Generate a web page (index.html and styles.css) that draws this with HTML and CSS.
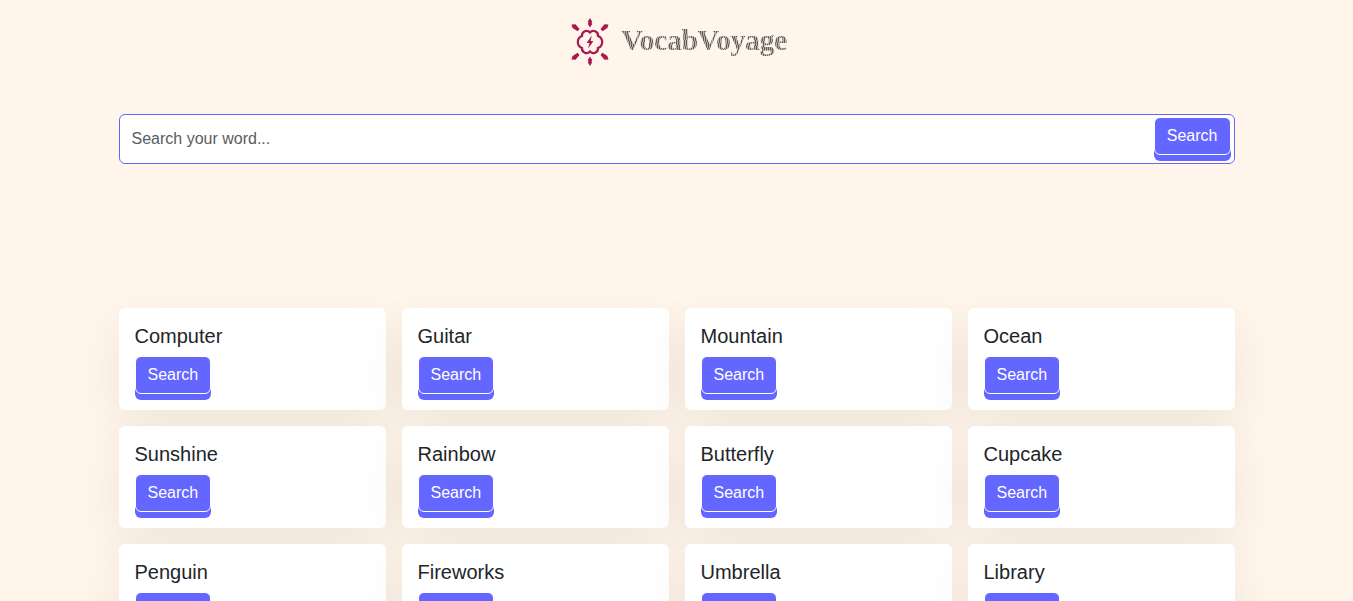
FILE: index.html
```html
<!DOCTYPE html>
<html lang="en">
  <head>
    <meta charset="utf-8" />
    <title>VocabVoyage</title>
    <meta name="viewport" content="width=device-width, initial-scale=1" />
    <link rel="stylesheet" href="styles.css">
  </head>
  <body>
    <header class="site_header">
      <a class="logo" href="#">
        <svg class="logo_icon" viewBox="0 0 40 50" width="40" height="50" aria-hidden="true">
          <g class="rays">
            <path d="M20 1 L22.4 5 L21.4 5.4 L22.2 7 L20 10.5 L17.8 7 L18.6 5 L17.6 5 Z" />
            <path d="M20 49 L17.6 45 L18.6 44.6 L17.8 43 L20 39.5 L22.2 43 L21.4 45 L22.4 45 Z" />
            <path d="M1.5 7.5 L5.5 7.2 L9.5 12 L7.6 14.2 L2.6 11 Z" />
            <path d="M38.5 7.5 L34.5 7.2 L30.5 12 L32.4 14.2 L37.4 11 Z" />
            <path d="M1.5 42.5 L5.5 42.8 L9.5 38 L7.6 35.8 L2.6 39 Z" />
            <path d="M38.5 42.5 L34.5 42.8 L30.5 38 L32.4 35.8 L37.4 39 Z" />
          </g>
          <path class="cloud" d="M20 15.5 A4.6 4.6 0 0 1 28 19 A6.4 6.4 0 0 1 28 31 A4.6 4.6 0 0 1 20 34.5 A4.6 4.6 0 0 1 12 31 A6.4 6.4 0 0 1 12 19 A4.6 4.6 0 0 1 20 15.5 Z" />
          <path class="bolt" d="M21.8 18.5 L16.6 26 L19.4 26 L18.2 31.5 L23.4 24 L20.6 24 Z" />
        </svg>
        <span class="logo_text">VocabVoyage</span>
      </a>
    </header>

    <main class="container">
      <form class="search_bar" onsubmit="return false;">
        <input class="search_input" type="text" placeholder="Search your word..." />
        <button class="search_btn">Search</button>
      </form>

      <section class="word_grid">
        <div class="word_card"><h5 class="word_title">Computer</h5><button class="search_btn">Search</button></div>
        <div class="word_card"><h5 class="word_title">Guitar</h5><button class="search_btn">Search</button></div>
        <div class="word_card"><h5 class="word_title">Mountain</h5><button class="search_btn">Search</button></div>
        <div class="word_card"><h5 class="word_title">Ocean</h5><button class="search_btn">Search</button></div>
        <div class="word_card"><h5 class="word_title">Sunshine</h5><button class="search_btn">Search</button></div>
        <div class="word_card"><h5 class="word_title">Rainbow</h5><button class="search_btn">Search</button></div>
        <div class="word_card"><h5 class="word_title">Butterfly</h5><button class="search_btn">Search</button></div>
        <div class="word_card"><h5 class="word_title">Cupcake</h5><button class="search_btn">Search</button></div>
        <div class="word_card"><h5 class="word_title">Penguin</h5><button class="search_btn">Search</button></div>
        <div class="word_card"><h5 class="word_title">Fireworks</h5><button class="search_btn">Search</button></div>
        <div class="word_card"><h5 class="word_title">Umbrella</h5><button class="search_btn">Search</button></div>
        <div class="word_card"><h5 class="word_title">Library</h5><button class="search_btn">Search</button></div>
      </section>
    </main>
  </body>
</html>
```
FILE: styles.css
```css
* {
  box-sizing: border-box;
}
body {
  margin: 0;
  background: #fff5eb;
  color: #212529;
  font-family: "Liberation Sans", Arial, sans-serif;
  font-size: 16px;
  line-height: 1.5;
}
.site_header {
  display: flex;
  justify-content: center;
  height: 114px;
  padding-top: 17px;
}
.logo {
  display: flex;
  align-items: flex-start;
  gap: 11px;
  height: 50px;
  margin-left: 4px;
  text-decoration: none;
}
.logo_icon {
  display: block;
}
.rays,
.bolt {
  fill: #a8184f;
}
.cloud {
  fill: none;
  stroke: #a8184f;
  stroke-width: 2.2;
}
.logo_text {
  margin-top: 3px;
  font-family: "Liberation Serif", serif;
  font-weight: bold;
  font-size: 30px;
  line-height: 40px;
  letter-spacing: -0.5px;
  color: transparent;
  background: repeating-linear-gradient(100deg, #5f5c59 0 1px, #b5b1ac 1px 2px);
  -webkit-background-clip: text;
  background-clip: text;
}

.container {
  width: 1116px;
  margin: 0 auto;
}
.search_bar {
  display: flex;
  align-items: flex-start;
  height: 50px;
  padding: 2px 3px 0 0;
  background: #fff;
  border: 1px solid #6366ff;
  border-radius: 6px;
}
.search_input {
  flex: 1;
  height: 44px;
  padding: 0 12px;
  border: 0;
  outline: 0;
  background: transparent;
  font-family: inherit;
  font-size: 16px;
  color: #212529;
}
.search_input::placeholder {
  color: #595c5f;
}
.search_btn {
  display: block;
  height: 38px;
  padding: 6px 12px;
  background: #6366ff;
  color: #fff;
  border: 1px solid #fff;
  border-radius: 6px;
  box-shadow: 0 6px 0 #6366ff;
  font-family: inherit;
  font-size: 16px;
  line-height: 24px;
}

.word_grid {
  display: grid;
  grid-template-columns: repeat(4, 1fr);
  gap: 16px;
  margin-top: 144px;
  padding-bottom: 32px;
}
.word_card {
  padding: 16px;
  background: #fff;
  border-radius: 6px;
  box-shadow: 0 16px 48px rgba(40, 35, 25, 0.065);
}
.word_title {
  margin: 0 0 8px;
  font-size: 20px;
  font-weight: 400;
  line-height: 24px;
}
```
